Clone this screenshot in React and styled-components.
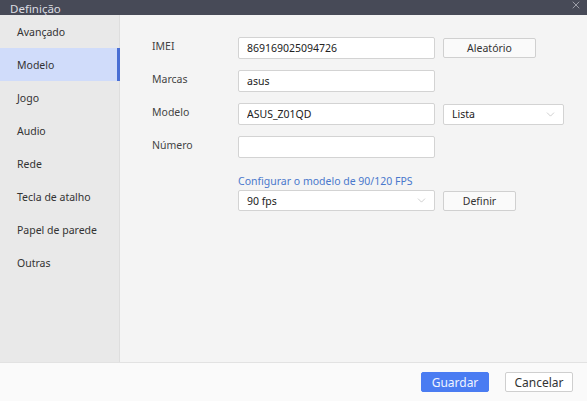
import styled, { createGlobalStyle } from "styled-components";
import { ChevronDown, X } from "lucide-react";

const GlobalStyle = createGlobalStyle`
  html, body {
    margin: 0;
    padding: 0;
    background: #f4f4f4;
  }
  * {
    box-sizing: border-box;
  }
  body {
    font-family: "Noto Sans", "Open Sans", sans-serif;
  }
`;

const menu = [
  "Avançado",
  "Modelo",
  "Jogo",
  "Audio",
  "Rede",
  "Tecla de atalho",
  "Papel de parede",
  "Outras",
];

export default function App() {
  return (
    <>
      <GlobalStyle />
      <Window>
        <TitleBar>
          <Title>Definição</Title>
          <CloseIcon size={12} strokeWidth={1.5} />
        </TitleBar>

        <Body>
          <Sidebar>
            {menu.map((item) => (
              <MenuItem key={item} $active={item === "Modelo"}>
                {item}
              </MenuItem>
            ))}
          </Sidebar>

          <Content>
            <Form>
              <Label>IMEI</Label>
              <Input defaultValue="869169025094726" />
              <Button $width={93}>Aleatório</Button>

              <Label>Marcas</Label>
              <Input defaultValue="asus" />
              <span />

              <Label>Modelo</Label>
              <Input defaultValue="ASUS_Z01QD" />
              <Select $width={121}>
                <span>Lista</span>
                <Chevron size={13} strokeWidth={1} />
              </Select>

              <Label>Número</Label>
              <Input defaultValue="" />
              <span />

              <span />
              <LinkText>Configurar o modelo de 90/120 FPS</LinkText>
              <span />

              <span />
              <Select $width={197}>
                <span>90 fps</span>
                <Chevron size={13} strokeWidth={1} />
              </Select>
              <Button $width={73}>Definir</Button>
            </Form>
          </Content>
        </Body>

        <Footer>
          <PrimaryButton>Guardar</PrimaryButton>
          <FooterButton>Cancelar</FooterButton>
        </Footer>
      </Window>
    </>
  );
}

const Window = styled.div`
  width: 587px;
  height: 401px;
  display: flex;
  flex-direction: column;
  overflow: hidden;
`;

const TitleBar = styled.div`
  height: 15px;
  flex-shrink: 0;
  background: #474a57;
  display: flex;
  align-items: flex-end;
  justify-content: space-between;
  padding: 0 5px 0 10px;
  overflow: hidden;
`;

const Title = styled.div`
  color: #dcdde2;
  font-size: 11.5px;
  line-height: 15px;
  margin-bottom: -1px;
`;

const CloseIcon = styled(X)`
  color: #b8bac2;
  align-self: flex-start;
  margin-top: -1px;
`;

const Body = styled.div`
  flex: 1;
  display: flex;
  min-height: 0;
`;

const Sidebar = styled.div`
  width: 120px;
  flex-shrink: 0;
  background: #e9e9e9;
  border-right: 1px solid #dedede;
  display: flex;
  flex-direction: column;
`;

const MenuItem = styled.div`
  height: 33px;
  display: flex;
  align-items: center;
  padding-left: 17px;
  font-size: 10.5px;
  color: #333;
  background: ${(p) => (p.$active ? "#d0dcfa" : "transparent")};
  border-right: 3px solid ${(p) => (p.$active ? "#4a6fd4" : "transparent")};
  margin-right: -1px;
`;

const Content = styled.div`
  flex: 1;
  background: #f4f4f4;
  padding: 22px 0 0 32px;
`;

const Form = styled.div`
  display: grid;
  grid-template-columns: 78px 197px auto;
  column-gap: 8px;
  row-gap: 11px;
  align-items: center;
  justify-items: start;
`;

const Label = styled.div`
  font-size: 10.5px;
  color: #444;
  margin-top: -5px;
`;

const Input = styled.input`
  width: 197px;
  height: 22px;
  border: 1px solid #d3d3d3;
  border-radius: 2px;
  background: #fff;
  padding: 0 8px;
  font-family: inherit;
  font-size: 10.5px;
  color: #222;
  outline: none;
`;

const Button = styled.button`
  width: ${(p) => p.$width}px;
  height: 20px;
  border: 1px solid #d0d0d0;
  border-radius: 2px;
  background: #fafafa;
  font-family: inherit;
  font-size: 10.5px;
  color: #333;
  padding: 0;
`;

const Select = styled.div`
  width: ${(p) => p.$width}px;
  height: 21px;
  border: 1px solid #d3d3d3;
  border-radius: 2px;
  background: #fff;
  display: flex;
  align-items: center;
  justify-content: space-between;
  padding: 0 6px 0 8px;
  font-size: 10.5px;
  color: #222;
`;

const Chevron = styled(ChevronDown)`
  color: #a8a8a8;
`;

const LinkText = styled.div`
  font-size: 10.5px;
  color: #4a78cc;
  margin: 5px 0 -9px;
`;

const Footer = styled.div`
  height: 39px;
  flex-shrink: 0;
  background: #fafafa;
  border-top: 1px solid #e2e2e2;
  display: flex;
  align-items: center;
  justify-content: flex-end;
  gap: 16px;
  padding-right: 14px;
`;

const FooterButton = styled.button`
  width: 68px;
  height: 20px;
  border: 1px solid #cfcfcf;
  border-radius: 2px;
  background: #fff;
  font-family: inherit;
  font-size: 12px;
  color: #333;
  padding: 0;
`;

const PrimaryButton = styled(FooterButton)`
  background: #4a7cf2;
  border-color: #4a7cf2;
  color: #f0f4ff;
`;
